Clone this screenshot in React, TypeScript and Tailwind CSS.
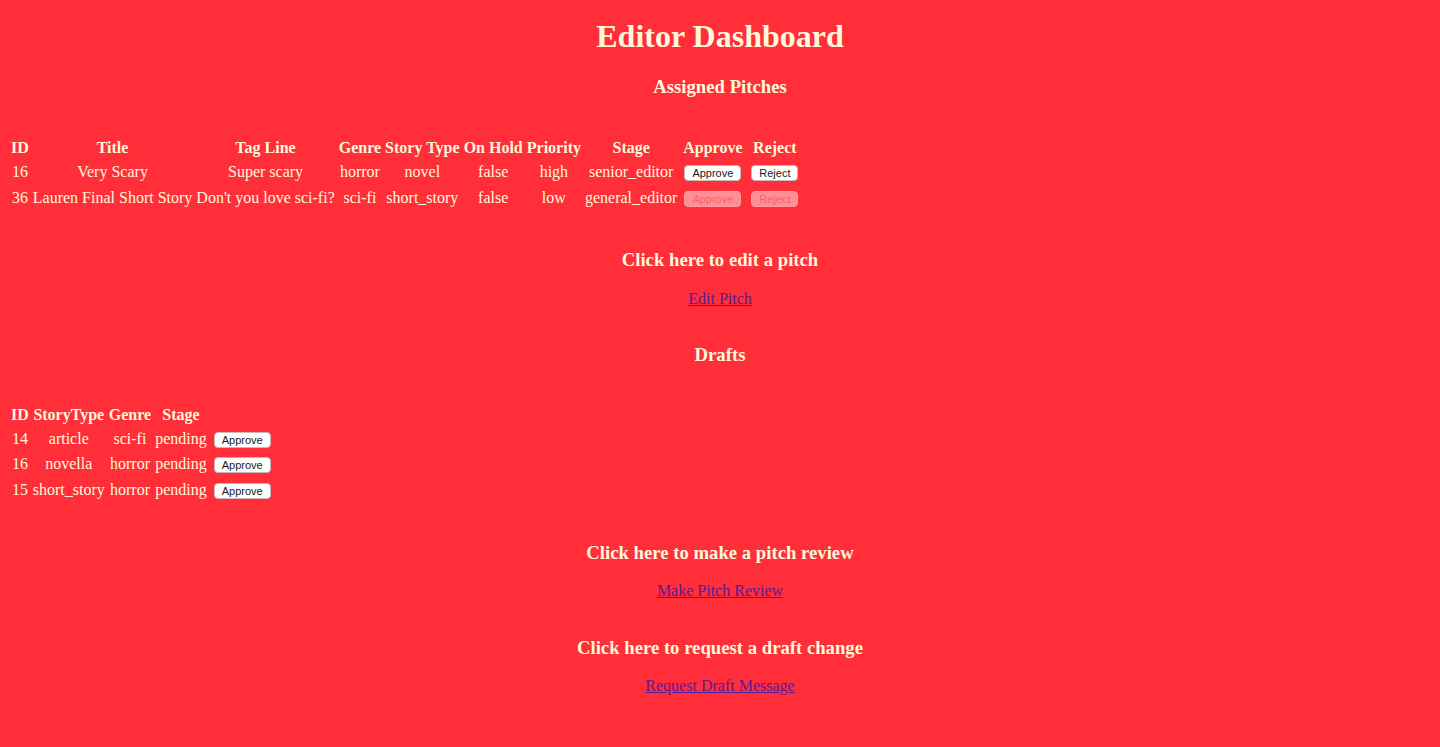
import React from "react";

interface Pitch {
  id: number;
  title: string;
  tagLine: string;
  genre: string;
  storyType: string;
  onHold: boolean;
  priority: string;
  stage: string;
  canReview: boolean;
}

interface Draft {
  id: number;
  storyType: string;
  genre: string;
  stage: string;
}

const pitches: Pitch[] = [
  {
    id: 16,
    title: "Very Scary",
    tagLine: "Super scary",
    genre: "horror",
    storyType: "novel",
    onHold: false,
    priority: "high",
    stage: "senior_editor",
    canReview: true,
  },
  {
    id: 36,
    title: "Lauren Final Short Story",
    tagLine: "Don't you love sci-fi?",
    genre: "sci-fi",
    storyType: "short_story",
    onHold: false,
    priority: "low",
    stage: "general_editor",
    canReview: false,
  },
];

const drafts: Draft[] = [
  { id: 14, storyType: "article", genre: "sci-fi", stage: "pending" },
  { id: 16, storyType: "novella", genre: "horror", stage: "pending" },
  { id: 15, storyType: "short_story", genre: "horror", stage: "pending" },
];

const SmallButton: React.FC<{ label: string; width: string; disabled?: boolean }> = ({
  label,
  width,
  disabled,
}) => (
  <button
    disabled={disabled}
    className={`${width} mx-[3px] h-[16px] rounded-[4px] border align-middle text-[11px] leading-[14px] font-['Liberation_Sans',Arial,sans-serif] ${
      disabled
        ? "bg-[#ff8f96] border-[#ff9da2] text-[#ff5f67]"
        : "bg-white border-[#c9b8b8] text-[#1a1a1a]"
    }`}
  >
    {label}
  </button>
);

const th = "px-[1px] py-[1px] font-bold text-center";
const td = "px-[1px] py-[1px] text-center h-[23.5px]";

const SectionTitle: React.FC<{ mt: string; children: React.ReactNode }> = ({ mt, children }) => (
  <h3 className={`${mt} text-[18.72px] font-bold leading-[normal]`}>{children}</h3>
);

const PageLink: React.FC<{ mt: string; children: React.ReactNode }> = ({ mt, children }) => (
  <div className={`${mt} leading-[normal]`}>
    <a href="#" className="text-[#5a1a96] underline">
      {children}
    </a>
  </div>
);

export default function App() {
  return (
    <div className="min-h-[747px] bg-[#ff2e38] text-[#fff8dc] text-[16px] text-center font-['Liberation_Serif','Times_New_Roman',serif] pt-[17.5px] pb-[40px]">
      <h1 className="text-[32px] font-bold leading-[normal]">Editor Dashboard</h1>

      <SectionTitle mt="mt-[21.6px]">Assigned Pitches</SectionTitle>

      <table className="mt-[38.2px] ml-[8px] border-separate border-spacing-[2px] leading-[normal]">
        <thead>
          <tr>
            <th className={th}>ID</th>
            <th className={th}>Title</th>
            <th className={th}>Tag Line</th>
            <th className={th}>Genre</th>
            <th className={th}>Story Type</th>
            <th className={th}>On Hold</th>
            <th className={th}>Priority</th>
            <th className={th}>Stage</th>
            <th className={th}>Approve</th>
            <th className={th}>Reject</th>
          </tr>
        </thead>
        <tbody>
          {pitches.map((p) => (
            <tr key={p.id}>
              <td className={td}>{p.id}</td>
              <td className={td}>{p.title}</td>
              <td className={td}>{p.tagLine}</td>
              <td className={td}>{p.genre}</td>
              <td className={td}>{p.storyType}</td>
              <td className={td}>{String(p.onHold)}</td>
              <td className={td}>{p.priority}</td>
              <td className={td}>{p.stage}</td>
              <td className={td}>
                <SmallButton label="Approve" width="w-[57px]" disabled={!p.canReview} />
              </td>
              <td className={td}>
                <SmallButton label="Reject" width="w-[47px]" disabled={!p.canReview} />
              </td>
            </tr>
          ))}
        </tbody>
      </table>

      <SectionTitle mt="mt-[37.4px]">Click here to edit a pitch</SectionTitle>
      <PageLink mt="mt-[19.3px]">Edit Pitch</PageLink>

      <SectionTitle mt="mt-[36.5px]">Drafts</SectionTitle>

      <table className="mt-[36.6px] ml-[8px] border-separate border-spacing-[2px] leading-[normal]">
        <thead>
          <tr>
            <th className={th}>ID</th>
            <th className={th}>StoryType</th>
            <th className={th}>Genre</th>
            <th className={th}>Stage</th>
            <th className={th}></th>
          </tr>
        </thead>
        <tbody>
          {drafts.map((d) => (
            <tr key={d.id}>
              <td className={td}>{d.id}</td>
              <td className={td}>{d.storyType}</td>
              <td className={td}>{d.genre}</td>
              <td className={td}>{d.stage}</td>
              <td className={td}>
                <SmallButton label="Approve" width="w-[57px]" />
              </td>
            </tr>
          ))}
        </tbody>
      </table>

      <SectionTitle mt="mt-[38.5px]">Click here to make a pitch review</SectionTitle>
      <PageLink mt="mt-[18px]">Make Pitch Review</PageLink>

      <SectionTitle mt="mt-[37px]">Click here to request a draft change</SectionTitle>
      <PageLink mt="mt-[17.5px]">Request Draft Message</PageLink>
    </div>
  );
}
